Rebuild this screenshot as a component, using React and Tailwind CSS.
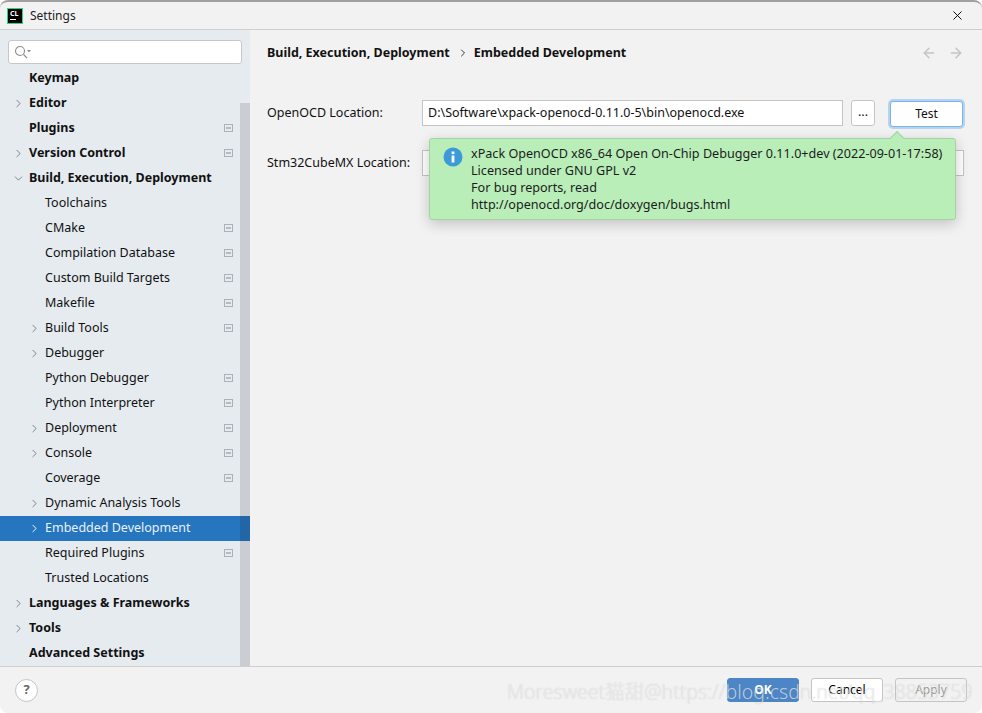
import React from "react";
import { ArrowLeft, ArrowRight, ChevronDown, ChevronRight, X } from "lucide-react";

const items = [
  { label: "Keymap", bold: true },
  { label: "Editor", bold: true, arrow: "right" },
  { label: "Plugins", bold: true, badge: true },
  { label: "Version Control", bold: true, arrow: "right", badge: true },
  { label: "Build, Execution, Deployment", bold: true, arrow: "down" },
  { label: "Toolchains", sub: true },
  { label: "CMake", sub: true, badge: true },
  { label: "Compilation Database", sub: true, badge: true },
  { label: "Custom Build Targets", sub: true, badge: true },
  { label: "Makefile", sub: true, badge: true },
  { label: "Build Tools", sub: true, arrow: "right", badge: true },
  { label: "Debugger", sub: true, arrow: "right" },
  { label: "Python Debugger", sub: true, badge: true },
  { label: "Python Interpreter", sub: true, badge: true },
  { label: "Deployment", sub: true, arrow: "right", badge: true },
  { label: "Console", sub: true, arrow: "right", badge: true },
  { label: "Coverage", sub: true, badge: true },
  { label: "Dynamic Analysis Tools", sub: true, arrow: "right" },
  { label: "Embedded Development", sub: true, arrow: "right", selected: true },
  { label: "Required Plugins", sub: true, badge: true },
  { label: "Trusted Locations", sub: true },
  { label: "Languages & Frameworks", bold: true, arrow: "right" },
  { label: "Tools", bold: true, arrow: "right" },
  { label: "Advanced Settings", bold: true },
];

// little project-level marker at the end of a row
const Badge = () => (
  <span className="ml-auto mr-[17px] flex h-[8px] w-[9px] -translate-y-[1px] items-center justify-center border border-[#a9b2ba] bg-[#e6ebf0]">
    <span className="h-[2px] w-[5px] bg-[#b4bcc3]" />
  </span>
);

const Row = ({ item }) => {
  const ArrowIcon = item.arrow === "down" ? ChevronDown : ChevronRight;
  return (
    <div
      className={`flex h-[25px] shrink-0 items-center ${item.selected ? "bg-[#2675bf] text-[#e8f1fa]" : "text-[#111111]"} ${item.bold ? "font-bold" : ""}`}
    >
      <span className={`flex w-[13px] shrink-0 justify-center ${item.sub ? "ml-[28px]" : "ml-[12px]"}`}>
        {item.arrow && (
          <ArrowIcon
            size={15}
            strokeWidth={1.7}
            className={item.selected ? "text-white" : "text-[#777c80]"}
          />
        )}
      </span>
      <span className="ml-[4px]">{item.label}</span>
      {item.badge && <Badge />}
    </div>
  );
};

const FooterButton = ({ children, className }) => (
  <button className={`flex h-[24px] w-[72px] items-center justify-center rounded-[3px] border text-[12px] ${className}`}>
    {children}
  </button>
);

export default function App() {
  return (
    <div
      className="relative flex h-[713px] w-[982px] flex-col overflow-hidden rounded-t-[8px] rounded-b-[8px] border-t-2 border-[#a0a0a0] bg-[#f2f2f2] text-[12.5px] text-[#111111]"
      style={{ fontFamily: '"Noto Sans", "Noto Sans CJK SC", sans-serif' }}
    >
      {/* title bar */}
      <div className="flex h-[28px] shrink-0 items-center border-b border-[#cfcfcf] pl-[7px] pr-[17px]">
        <span className="flex h-[16px] w-[16px] flex-col border border-[#21d789] bg-black px-[2px] pt-[1px] text-[7px] font-bold leading-[8px] text-white">
          CL
          <span className="mt-[1px] h-[1px] w-[6px] bg-white" />
        </span>
        <span className="ml-[7px] text-[12px] text-[#222222]">Settings</span>
        <X size={15} strokeWidth={1.5} className="ml-auto text-black" />
      </div>

      <div className="flex min-h-0 flex-1">
        {/* sidebar */}
        <aside className="relative flex w-[250px] shrink-0 flex-col overflow-hidden bg-[#e6ebf0]">
          <div className="z-10 h-[41px] shrink-0 bg-[#e6ebf0] px-[8px] pt-[10px]">
            <div className="flex h-[24px] w-[234px] items-center rounded-[3px] border border-[#c4c8cc] bg-white pl-[5px]">
              <svg width="17" height="14" viewBox="0 0 17 14" fill="none" stroke="#8c8c8c" strokeWidth="1.1">
                <circle cx="6" cy="6" r="4.5" />
                <path d="M9.5 9.5 13 13" />
                <path d="M13 5h4l-2 2.5z" fill="#8c8c8c" stroke="none" />
              </svg>
            </div>
          </div>
          <div className="-mt-[5px] flex flex-col">
            {items.map((item) => (
              <Row key={item.label} item={item} />
            ))}
          </div>
          {/* scrollbar */}
          <div className="absolute bottom-0 right-0 top-[73px] w-[10px] bg-black/12" />
        </aside>

        {/* content */}
        <main className="relative flex-1 pl-[17px] pr-[18px] pt-[13px]">
          <div className="flex h-[20px] items-center">
            <span className="font-bold text-[#111111]">Build, Execution, Deployment</span>
            <ChevronRight size={12} strokeWidth={1.8} className="ml-[7px] mr-[5px] text-[#222222]" />
            <span className="font-bold text-[#111111]">Embedded Development</span>
            <ArrowLeft size={16} strokeWidth={2.2} className="ml-auto text-[#c4c4c4]" />
            <ArrowRight size={16} strokeWidth={2.2} className="ml-[11px] text-[#c4c4c4]" />
          </div>

          <div className="mt-[37px] flex h-[27px] items-center">
            <span className="w-[155px] shrink-0">OpenOCD Location:</span>
            <div className="flex h-[26px] w-[421px] -translate-y-[1px] items-center border border-[#c4c4c4] bg-white pl-[5px] pt-[2px]">
              D:\Software\xpack-openocd-0.11.0-5\bin\openocd.exe
            </div>
            <button className="ml-[8px] flex h-[26px] w-[24px] -translate-y-[1px] items-center justify-center rounded-[3px] border border-[#c4c4c4] bg-white">
              ...
            </button>
            <button className="ml-[15px] flex h-[26px] w-[73px] items-center justify-center rounded-[3px] border border-[#7fb2e5] bg-white text-[12px] ring-2 ring-[#b5d4f2]">
              Test
            </button>
          </div>

          <div className="mt-[23px] flex h-[26px] items-center">
            <span className="w-[155px] shrink-0">Stm32CubeMX Location:</span>
            <div className="flex h-[26px] flex-1 items-center border border-[#c4c4c4] bg-white pl-[6px]">s</div>
          </div>

          {/* test result popup */}
          <div className="absolute left-[179px] top-[108px] w-[527px] rounded-[3px] border border-[#a3d3a3] bg-[#b9eeb9] pb-[6px] pl-[41px] pt-[6px] text-[12.6px] leading-[17px] text-[#1c1c1c] shadow-[0_4px_14px_rgba(0,0,0,0.2)]">
            <span className="absolute -top-[6px] left-[462px] h-[10px] w-[10px] rotate-45 border-l border-t border-[#a3d3a3] bg-[#b9eeb9]" />
            <svg className="absolute left-[13px] top-[8px]" width="20" height="20" viewBox="0 0 20 20">
              <circle cx="10" cy="10" r="9.5" fill="#3d9ad8" />
              <rect x="8.6" y="8.5" width="2.8" height="7" fill="#ffffff" />
              <rect x="8.6" y="4.5" width="2.8" height="2.6" fill="#ffffff" />
            </svg>
            <p>xPack OpenOCD x86_64 Open On-Chip Debugger 0.11.0+dev (2022-09-01-17:58)</p>
            <p>Licensed under GNU GPL v2</p>
            <p>For bug reports, read</p>
            <p>http://openocd.org/doc/doxygen/bugs.html</p>
          </div>
        </main>
      </div>

      {/* footer */}
      <footer className="flex h-[47px] shrink-0 items-center border-t border-[#cfcfcf] pl-[15px] pr-[15px]">
        <span className="flex h-[23px] w-[23px] items-center justify-center rounded-full border border-[#c4c4c4] bg-white text-[13px] font-bold text-[#666666]">
          ?
        </span>
        <div className="ml-auto flex gap-[12px]">
          <FooterButton className="border-[#4c86c6] bg-[#4c86c6] font-bold text-white">OK</FooterButton>
          <FooterButton className="border-[#c4c4c4] bg-white text-black">Cancel</FooterButton>
          <FooterButton className="border-[#c4c4c4] bg-[#f2f2f2] text-[#9a9a9a]">Apply</FooterButton>
        </div>
      </footer>

      {/* csdn watermark */}
      <span className="pointer-events-none absolute bottom-[7px] left-[507px] whitespace-nowrap text-[19.5px] font-light leading-[28px] text-white/60 [text-shadow:0_0_1px_rgba(110,110,110,0.35)]">
        Moresweet猫甜@https://blog.csdn.net/qq_38853759
      </span>
    </div>
  );
}
